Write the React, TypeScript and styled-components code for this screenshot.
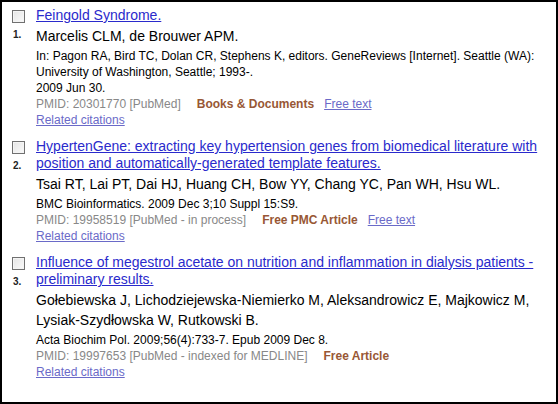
import React from 'react'
import styled, { createGlobalStyle } from 'styled-components'

interface IDoc {
    title: string
    authors: string
    source: string[]
    pmid: string
    category: string
    freeText?: boolean
}

const docs: IDoc[] = [
    {
        title: 'Feingold Syndrome.',
        authors: 'Marcelis CLM, de Brouwer APM.',
        source: [
            'In: Pagon RA, Bird TC, Dolan CR, Stephens K, editors. GeneReviews [Internet]. Seattle (WA): University of Washington, Seattle; 1993-.',
            '2009 Jun 30.',
        ],
        pmid: 'PMID: 20301770 [PubMed]',
        category: 'Books & Documents',
        freeText: true,
    },
    {
        title: 'HypertenGene: extracting key hypertension genes from biomedical literature with position and automatically-generated template features.',
        authors: 'Tsai RT, Lai PT, Dai HJ, Huang CH, Bow YY, Chang YC, Pan WH, Hsu WL.',
        source: ['BMC Bioinformatics. 2009 Dec 3;10 Suppl 15:S9.'],
        pmid: 'PMID: 19958519 [PubMed - in process]',
        category: 'Free PMC Article',
        freeText: true,
    },
    {
        title: 'Influence of megestrol acetate on nutrition and inflammation in dialysis patients - preliminary results.',
        authors: 'Gołebiewska J, Lichodziejewska-Niemierko M, Aleksandrowicz E, Majkowicz M, Lysiak-Szydłowska W, Rutkowski B.',
        source: ['Acta Biochim Pol. 2009;56(4):733-7. Epub 2009 Dec 8.'],
        pmid: 'PMID: 19997653 [PubMed - indexed for MEDLINE]',
        category: 'Free Article',
    },
]

const App = () => {
    return (
        <>
            <GlobalStyle />
            <Frame>
                {docs.map((doc, i) => (
                    <Item key={doc.pmid}>
                        <Gutter>
                            <CheckBox />
                            <Num>{i + 1}.</Num>
                        </Gutter>
                        <Body>
                            <Title href='#'>{doc.title}</Title>
                            <Authors>{doc.authors}</Authors>
                            <Source>
                                {doc.source.map((line) => (
                                    <div key={line}>{line}</div>
                                ))}
                            </Source>
                            <Meta>
                                {doc.pmid}
                                <Category>{doc.category}</Category>
                                {doc.freeText && <SmallLink href='#'>Free text</SmallLink>}
                            </Meta>
                            <Meta>
                                <SmallLink href='#' $first>Related citations</SmallLink>
                            </Meta>
                        </Body>
                    </Item>
                ))}
            </Frame>
        </>
    )
}

export default App

const GlobalStyle = createGlobalStyle`
    html, body {
        margin: 0;
        padding: 0;
        background: #fff;
    }
    body {
        font-family: 'Liberation Sans', Arial, sans-serif;
    }
`

const Frame = styled.div`
    box-sizing: border-box;
    width: 558px;
    height: 404px;
    border: 2px solid #000;
    padding: 5px 10px 0 10px;
    display: flex;
    flex-direction: column;
    gap: 10px;
`

const Item = styled.div`
    display: grid;
    grid-template-columns: 24px 1fr;
`

const Gutter = styled.div`
    display: flex;
    flex-direction: column;
    align-items: flex-start;
    padding-top: 3px;
`

const CheckBox = styled.span`
    box-sizing: border-box;
    width: 13px;
    height: 13px;
    border: 1px solid #707070;
    background: linear-gradient(135deg, #e4e4e4 0%, #fafafa 100%);
    box-shadow: inset 0 0 0 1px #f4f4f4;
`

const Num = styled.span`
    margin-top: 6px;
    margin-left: 1px;
    font-size: 10px;
    font-weight: bold;
    color: #222;
`

const Body = styled.div`
    display: flex;
    flex-direction: column;
    align-items: flex-start;
    padding-right: 4px;
`

const Title = styled.a`
    font-size: 14px;
    line-height: 17px;
    color: #2a2acc;
    text-decoration: underline;
`

const Authors = styled.div`
    margin-top: 2px;
    font-size: 14px;
    line-height: 20px;
    color: #000;
`

const Source = styled.div`
    margin-top: 2px;
    font-size: 12px;
    line-height: 16px;
    color: #000;
`

const Meta = styled.div`
    font-size: 12px;
    line-height: 16px;
    color: #888;
`

const Category = styled.span`
    margin-left: 16px;
    font-weight: bold;
    color: #985735;
`

const SmallLink = styled.a<{ $first?: boolean }>`
    margin-left: ${(p) => (p.$first ? '0' : '10px')};
    color: #6a6ac8;
    text-decoration: underline;
`
